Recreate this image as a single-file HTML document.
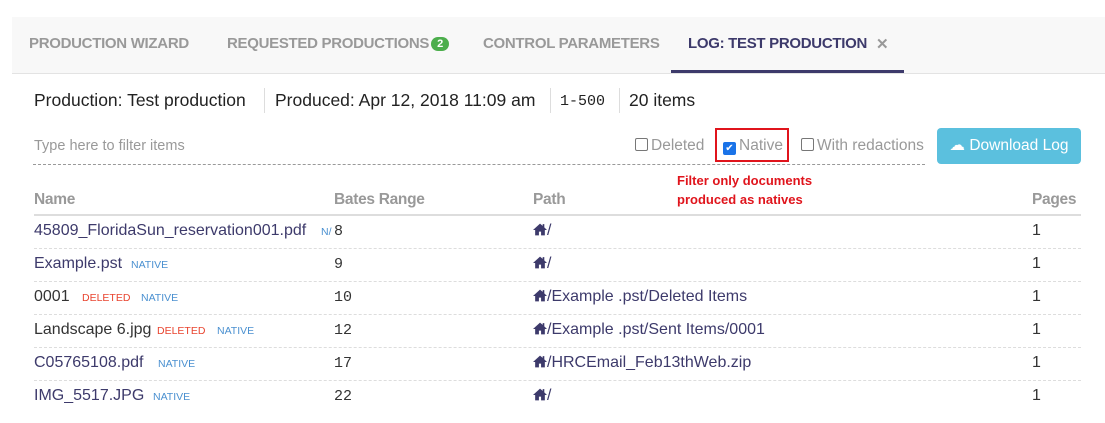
<!DOCTYPE html>
<html><head><style>
body{margin:0;width:1105px;height:423px;background:#fff;font-family:"Liberation Sans",sans-serif;position:relative;overflow:hidden}
.a{position:absolute;white-space:nowrap}
.tabs{position:absolute;left:12px;top:17px;width:1093px;height:56px;background:#f8f8f8;border-bottom:1px solid #e3e3e3}
.tab{position:absolute;top:18px;font-size:15px;font-weight:bold;color:#999;letter-spacing:-0.3px}
.mono{font-family:"Liberation Mono",monospace}
.hdr{font-size:15.5px;color:#999;font-weight:bold;letter-spacing:-0.3px}
.row{position:absolute;left:34px;width:1047px;height:33px;border-bottom:1px dashed #ddd}
.row span{position:absolute;top:7px;font-size:16px;white-space:nowrap}
.nm{left:0;color:#3d3a6b}
.tag{font-size:10.5px!important;top:11px!important;color:#4a90d0}
.del{color:#e8432e}
.b{left:300px;color:#333;font-family:"Liberation Mono",monospace;font-size:15px!important;top:8px!important}
.p{left:499px;color:#3d3a6b}
.pg{left:998px;color:#333}
.home{display:inline-block;width:14px;height:13px;vertical-align:-1px}
.cb{display:inline-block;width:11px;height:11px;border:1px solid #777;border-radius:2px;vertical-align:-1px;margin-right:3px;background:#fff}
</style></head><body>
<div class="tabs">
<div class="tab" style="left:17px">PRODUCTION WIZARD</div>
<div class="tab" style="left:215px">REQUESTED PRODUCTIONS<span style="display:inline-block;background:#4cae4c;color:#fff;font-size:11px;border-radius:8px;padding:1px 6px;margin-left:2px;vertical-align:1px">2</span></div>
<div class="tab" style="left:471px">CONTROL PARAMETERS</div>
<div class="tab" style="left:676px;color:#3d3a6b">LOG: TEST PRODUCTION</div>
<div class="tab" style="left:864px;color:#999;font-size:15px">✕</div>
<div style="position:absolute;left:659px;top:53px;width:233px;height:3px;background:#3d3a6b"></div>
</div>
<div class="a" style="left:34px;top:90px;font-size:17.5px;color:#222">Production: Test production</div>
<div class="a" style="left:264px;top:88px;width:1px;height:25px;background:#ddd"></div>
<div class="a" style="left:275px;top:90px;font-size:17.5px;color:#222">Produced: Apr 12, 2018 11:09 am</div>
<div class="a" style="left:550px;top:88px;width:1px;height:25px;background:#ddd"></div>
<div class="a mono" style="left:560px;top:93px;font-size:15px;color:#222">1-500</div>
<div class="a" style="left:619px;top:88px;width:1px;height:25px;background:#ddd"></div>
<div class="a" style="left:629px;top:90px;font-size:17.5px;color:#222">20 items</div>
<div class="a" style="left:34px;top:138px;font-size:14.5px;color:#999">Type here to filter items</div>
<div class="a" style="left:33px;top:164px;width:892px;border-top:1px dashed #999"></div>
<div class="a" style="left:635px;top:137px;font-size:15.5px;color:#999"><span class="cb"></span>Deleted</div>
<div class="a" style="left:715px;top:128px;width:70px;height:30px;border:2px solid #e0141c"></div>
<div class="a" style="left:723px;top:137px;font-size:15.5px;color:#999"><span class="cb" style="background:#1a73e8;border-color:#1a73e8;color:#fff;font-size:10px;line-height:11px;text-align:center">✔</span>Native</div>
<div class="a" style="left:801px;top:137px;font-size:15.5px;color:#999"><span class="cb"></span>With redactions</div>
<div class="a" style="left:937px;top:128px;width:144px;height:36px;background:#5bc0de;border-radius:4px;color:#fff;font-size:15.5px;line-height:36px;text-align:center">☁ Download Log</div>
<div class="a" style="left:677px;top:171px;font-size:13px;font-weight:bold;color:#e0141c;line-height:19px">Filter only documents<br>produced as natives</div>
<div class="a hdr" style="left:34px;top:191px">Name</div>
<div class="a hdr" style="left:334px;top:191px">Bates Range</div>
<div class="a hdr" style="left:533px;top:191px">Path</div>
<div class="a hdr" style="left:1032px;top:191px">Pages</div>
<div class="a" style="left:34px;top:214px;width:1047px;border-top:2px solid #ddd"></div>
<svg width="0" height="0" style="position:absolute"><defs><symbol id="h" viewBox="0 0 13 12"><path d="M6.5 0.5L0 6.5h2v5h3.5V8h2v3.5H11v-5h2L10.5 4V1H9v1.6z" fill="#3d3a6b"/></symbol></defs></svg>
<div class="row" style="top:215px"><span class="nm">45809_FloridaSun_reservation001.pdf</span><span class="tag" style="left:287px">N/</span><span class="b">8</span><span class="p"><svg class="home" width="14" height="13"><use href="#h"/></svg>/</span><span class="pg">1</span></div>
<div class="row" style="top:248px"><span class="nm">Example.pst</span><span class="tag" style="left:97px">NATIVE</span><span class="b">9</span><span class="p"><svg class="home" width="14" height="13"><use href="#h"/></svg>/</span><span class="pg">1</span></div>
<div class="row" style="top:281px"><span class="nm" style="color:#333">0001</span><span class="tag del" style="left:48px">DELETED</span><span class="tag" style="left:107px">NATIVE</span><span class="b">10</span><span class="p"><svg class="home" width="14" height="13"><use href="#h"/></svg>/Example .pst/Deleted Items</span><span class="pg">1</span></div>
<div class="row" style="top:314px"><span class="nm" style="color:#333">Landscape 6.jpg</span><span class="tag del" style="left:123px">DELETED</span><span class="tag" style="left:183px">NATIVE</span><span class="b">12</span><span class="p"><svg class="home" width="14" height="13"><use href="#h"/></svg>/Example .pst/Sent Items/0001</span><span class="pg">1</span></div>
<div class="row" style="top:347px"><span class="nm">C05765108.pdf</span><span class="tag" style="left:124px">NATIVE</span><span class="b">17</span><span class="p"><svg class="home" width="14" height="13"><use href="#h"/></svg>/HRCEmail_Feb13thWeb.zip</span><span class="pg">1</span></div>
<div class="row" style="top:380px;border-bottom:none"><span class="nm">IMG_5517.JPG</span><span class="tag" style="left:119px">NATIVE</span><span class="b">22</span><span class="p"><svg class="home" width="14" height="13"><use href="#h"/></svg>/</span><span class="pg">1</span></div>
</body></html>
